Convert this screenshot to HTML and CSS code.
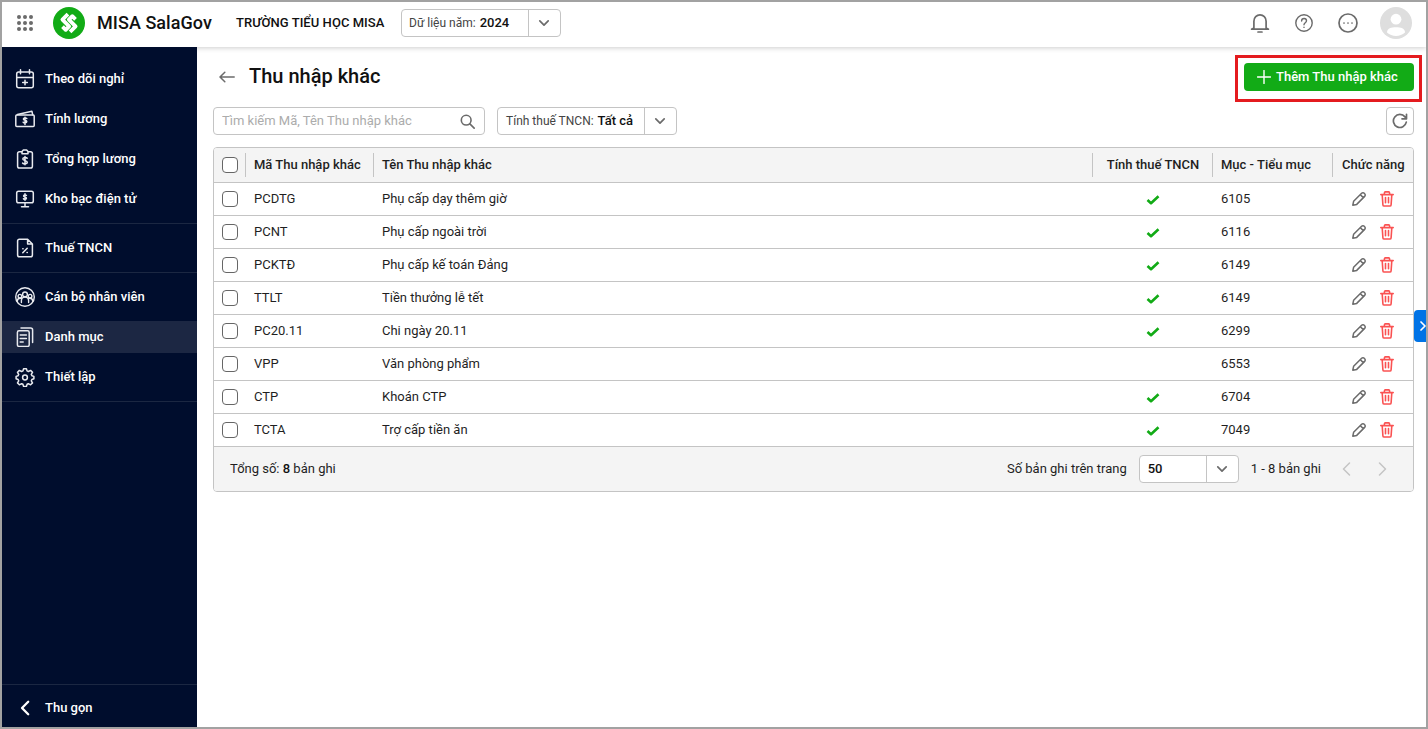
FILE: index.html
```
<!DOCTYPE html>
<html lang="vi">
<head>
  <meta charset="UTF-8">
  <meta name="viewport" content="width=device-width, initial-scale=1.0">
  <title>MISA SalaGov - Thu nhập khác</title>
  <link rel="stylesheet" href="styles.css">
</head>
<body>

<!-- Shared icons -->
<svg class="sprite">
  <symbol id="chevron" viewBox="0 0 12 12"><path d="M1.8 3.9 6 8.1l4.2-4.2"/></symbol>
  <symbol id="check" viewBox="0 0 14 12"><path d="M1.500 6 5 9.200l7.500-7"/></symbol>
  <symbol id="pencil" viewBox="0 0 16 16"><path d="M1.800 14.200l.8-3.900 8-8c.8-.8 2-.8 2.700 0l.4.4c.7.7.7 1.900 0 2.700l-8 8zM9.400 3.700l2.900 2.900"/></symbol>
  <symbol id="trash" viewBox="0 0 14 16"><path d="M.8 3.6h12.4M2.2 3.8l.7 10c.1.8.5 1.2 1.2 1.2h5.8c.7 0 1.1-.4 1.2-1.2l.7-10M4.4 3.4V1.9c0-.6.4-1 1-1h3.200c.6 0 1 .4 1 1v1.5M5.500 6.600v5.200M8.500 6.600v5.200"/></symbol>
</svg>

<header>
  <svg class="apps" viewBox="0 0 16 16">
    <circle cx="2" cy="2" r="2"/><circle cx="8" cy="2" r="2"/><circle cx="14" cy="2" r="2"/>
    <circle cx="2" cy="8" r="2"/><circle cx="8" cy="8" r="2"/><circle cx="14" cy="8" r="2"/>
    <circle cx="2" cy="14" r="2"/><circle cx="8" cy="14" r="2"/><circle cx="14" cy="14" r="2"/>
  </svg>
  <svg class="logo" viewBox="0 0 32 32">
    <circle cx="16" cy="16" r="16" fill="#12ab16"/>
    <g fill="none" stroke="#fff" stroke-width="3.800" stroke-linecap="butt" transform="translate(16 16) rotate(45)">
      <path d="M-7-5.500V2.300H2.500V7.200H-2"/>
      <path d="M7 5.500V-2.300H-2.500V-7.200H2"/>
    </g>
  </svg>
  <span class="brand">MISA SalaGov</span>
  <span class="school">TRƯỜNG TIỂU HỌC MISA</span>
  <div class="select year">
    <span>Dữ liệu năm: <b>2024</b></span>
    <i><svg><use href="#chevron"/></svg></i>
  </div>
  <div class="header-icons">
    <svg class="bell" viewBox="0 0 20 20"><path d="M1.600 16.200h16.800M3.900 16V8.200a6.100 6.400 0 0 1 12.200 0V16M3.900 14.600l-1.900 1.500M16.100 14.600l1.900 1.500M8 19h4"/></svg>
    <svg class="help" viewBox="0 0 20 20"><circle cx="10" cy="10" r="8.200"/><path d="M7.600 8c0-1.500 1.100-2.500 2.500-2.500s2.400 1 2.400 2.300c0 1.900-2.500 2-2.500 4M10 14.200v.2"/></svg>
    <svg class="more" viewBox="0 0 20 20"><circle cx="10" cy="10" r="9"/><path class="dots" d="M6 10h.01M10 10h.01M14 10h.01"/></svg>
    <svg class="avatar" viewBox="0 0 32 32"><circle cx="16" cy="16" r="16" fill="#dedede"/><circle cx="16" cy="12.200" r="5.400" fill="#fff"/><path d="M7 25.500c0-4 4.200-5.200 9-5.200s9 1.200 9 5.200c-2.600 2.300-5.600 3.400-9 3.400s-6.400-1.100-9-3.400z" fill="#fff"/></svg>
  </div>
</header>

<div class="layout">
  <!-- Sidebar -->
  <nav>
    <div class="group first">
      <a><svg viewBox="0 0 20 20"><rect x="1.700" y="3" width="16.600" height="15.800" rx="2"/><path d="M1.700 8.500h16.600M5.500.8v4M14.500.8v4M10 11.200v4.600M7.700 13.500h4.600"/></svg><span>Theo dõi nghỉ</span></a>
      <a><svg viewBox="0 0 20 20"><rect x=".8" y="6" width="18.400" height="11.400" rx="1"/><path d="M2.400 5.600 16.900 2.200l.8 3.600M11.800 9.500c-.5-.6-3.400-1-3.400.6 0 1.500 3.400.9 3.400 2.500 0 1.700-3 1.400-3.600.6M10 8.200v7.200"/></svg><span>Tính lương</span></a>
      <a><svg viewBox="0 0 20 20"><path d="M6.500 2.700H4.400c-1.100 0-1.800.7-1.800 1.800v12.700c0 1.100.7 1.800 1.800 1.800h11.200c1.100 0 1.800-.7 1.800-1.800V4.500c0-1.100-.7-1.800-1.800-1.800h-2.100"/><path d="M7 4.800h6V2.600L11.600 1H8.400L7 2.600zM12.200 9.200c-.7-1-4.400-1.200-4.400.8s4.500 1.300 4.500 3.300-3.900 1.900-4.700.7M10 7.600v8.200"/></svg><span>Tổng hợp lương</span></a>
      <a><svg viewBox="0 0 20 20"><rect x="1.700" y="2.200" width="16.600" height="11.600" rx="1.800"/><path d="M10 13.800v4M6.500 17.800h7M11.400 6.400c-.5-.7-2.800-.8-2.800.5s2.800.9 2.800 2.300-2.300 1.300-2.900.5M10 4.800v6.400"/></svg><span>Kho bạc điện tử</span></a>
    </div>
    <div class="group">
      <a><svg viewBox="0 0 20 20"><path d="M12.600 1.200H4.400c-1.100 0-1.800.7-1.800 1.800v14c0 1.100.7 1.800 1.800 1.800h11.200c1.100 0 1.800-.7 1.800-1.800V6zv4.800h4.800M7.800 14.800l4.400-4.600M7.800 10.800h.3M12 14.400h.3"/></svg><span>Thuế TNCN</span></a>
    </div>
    <div class="group">
      <a><svg class="people" viewBox="0 0 20 20"><circle cx="10" cy="10" r="9.300"/><circle cx="10" cy="7.400" r="2.400"/><circle cx="4.900" cy="9.200" r="1.800"/><circle cx="15.100" cy="9.200" r="1.800"/><path d="M6.400 15.600v-2c0-2 1.600-3.600 3.600-3.600s3.600 1.600 3.600 3.600v2M2.200 14.400c0-2 1-3.200 2.800-3.200l1.600.6M17.800 14.400c0-2-1-3.200-2.800-3.200l-1.600.6"/></svg><span>Cán bộ nhân viên</span></a>
      <a class="active"><svg viewBox="0 0 20 20"><rect x="2.400" y="3.800" width="11.800" height="15.600" rx="1.600"/><path d="M6 1h9.600c1.200 0 2 .8 2 2v12.500M5.200 8h6.200M5.200 11.500h6.200M5.200 15h3"/></svg><span>Danh mục</span></a>
      <a><svg viewBox="0 0 20 20"><path d="M8.600 1.700h2.800l.7 2.200 1.300.6 2.200-1.100 1.900 1.900-1.200 2.100.6 1.300 2 .7v2.300l-2 .8-.6 1.300 1.200 2.100-1.900 1.900-2.200-1.100-1.300.6-.7 2.100H8.600l-.7-2.100-1.300-.6-2.200 1.100-1.900-1.900 1.200-2.100-.6-1.300-2-.8V9.400l2-.7.6-1.300-1.200-2.100 1.900-1.900 2.200 1.100 1.300-.6z"/><circle cx="10" cy="10.500" r="2.400"/></svg><span>Thiết lập</span></a>
    </div>
    <div class="collapse">
      <a><svg class="back" viewBox="0 0 20 20"><path d="M13.200 3.800 7 10l6.200 6.200"/></svg><span>Thu gọn</span></a>
    </div>
  </nav>

  <main>
    <div class="title-row">
      <svg class="arrow" viewBox="0 0 16 12"><path d="M15.200 6H1.200M5.800 1.200 1 6l4.800 4.800"/></svg>
      <h1>Thu nhập khác</h1>
      <button class="add"><svg viewBox="0 0 14 14"><path d="M7 .5v13M.5 7h13"/></svg><span>Thêm Thu nhập khác</span></button>
    </div>

    <div class="toolbar">
      <div class="search">
        <input type="text" placeholder="Tìm kiếm Mã, Tên Thu nhập khác">
        <svg viewBox="0 0 16 16"><circle cx="6.600" cy="6.600" r="5.200"/><path d="M10.500 10.500l4.600 4.600"/></svg>
      </div>
      <div class="select tax">
        <span>Tính thuế TNCN: <b>Tất cả</b></span>
        <i><svg><use href="#chevron"/></svg></i>
      </div>
      <button class="reload"><svg viewBox="0 0 16 16"><path d="M14.300 9.200A6.500 6.500 0 1 1 13 3.900l1.300 1.500M14.500 1.300v4.500H10"/></svg></button>
    </div>

    <div class="grid">
      <table>
        <thead>
          <tr>
            <th class="c-check"><input type="checkbox"></th>
            <th class="c-code">Mã Thu nhập khác</th>
            <th>Tên Thu nhập khác</th>
            <th class="c-tax">Tính thuế TNCN</th>
            <th class="c-item">Mục - Tiểu mục</th>
            <th class="c-act">Chức năng</th>
          </tr>
        </thead>
        <tbody id="rows"></tbody>
      </table>
      <div class="pager">
        <span class="total">Tổng số: <b>8</b> bản ghi</span>
        <span class="per-page">Số bản ghi trên trang</span>
        <div class="select size">
          <span><b>50</b></span>
          <i><svg><use href="#chevron"/></svg></i>
        </div>
        <span class="range">1 - 8 bản ghi</span>
        <svg class="page prev" viewBox="0 0 9 14"><path d="M7.500 1 1.500 7l6 6"/></svg>
        <svg class="page next" viewBox="0 0 9 14"><path d="M1.500 1l6 6-6 6"/></svg>
      </div>
    </div>
  </main>
</div>

<div class="highlight"></div>
<div class="drawer"><svg viewBox="0 0 7 10"><path d="M2 1l4 4-4 4"/></svg></div>

<script>
  const items = [
    ['PCDTG', 'Phụ cấp dạy thêm giờ', true, '6105'],
    ['PCNT', 'Phụ cấp ngoài trời', true, '6116'],
    ['PCKTĐ', 'Phụ cấp kế toán Đảng', true, '6149'],
    ['TTLT', 'Tiền thưởng lễ tết', true, '6149'],
    ['PC20.11', 'Chi ngày 20.11', true, '6299'],
    ['VPP', 'Văn phòng phẩm', false, '6553'],
    ['CTP', 'Khoán CTP', true, '6704'],
    ['TCTA', 'Trợ cấp tiền ăn', true, '7049']
  ];

  document.getElementById('rows').innerHTML = items.map(([code, name, taxed, item]) => `
    <tr>
      <td class="c-check"><input type="checkbox"></td>
      <td>${code}</td>
      <td>${name}</td>
      <td class="c-tax">${taxed ? '<svg class="check"><use href="#check"/></svg>' : ''}</td>
      <td>${item}</td>
      <td class="c-act"><svg class="pencil"><use href="#pencil"/></svg><svg class="trash"><use href="#trash"/></svg></td>
    </tr>`).join('');
</script>

</body>
</html>
```
FILE: styles.css
```
* {
  box-sizing: border-box;
}
body {
  margin: 0;
  height: 729px;
  border: 2px solid #a2a2a2;
  font-family: Roboto, sans-serif;
  font-size: 13px;
  color: #1f1f1f;
  background: #fff;
  overflow: hidden;
  display: flex;
  flex-direction: column;
}
svg {
  display: block;
  flex: none;
  fill: none;
  stroke: #6b6b6b;
  stroke-width: 1.7;
  stroke-linecap: round;
  stroke-linejoin: round;
}
b {
  font-weight: 500;
  color: #111;
}
.sprite {
  position: absolute;
  width: 0;
  height: 0;
}

/* Header */
header {
  height: 45px;
  flex: none;
  display: flex;
  align-items: center;
  padding: 0 14px 3px 15px;
  position: relative;
  box-shadow: 0 1px 5px rgba(0, 0, 0, 0.2);
}
.apps {
  width: 16px;
  height: 16px;
  fill: #6b6b6b;
  stroke: none;
}
.logo {
  width: 32px;
  height: 32px;
  margin-left: 20px;
  stroke: none;
}
.brand {
  margin-left: 12px;
  width: 139px;
  padding-bottom: 2px;
  font-size: 18px;
  font-weight: 500;
  letter-spacing: 0.05px;
  color: #111;
  white-space: nowrap;
}
.school {
  width: 165px;
  padding-bottom: 1px;
  font-weight: 500;
  letter-spacing: 0.05px;
  color: #111;
  white-space: nowrap;
}
.select {
  height: 28px;
  display: flex;
  border: 1px solid #c4c4c4;
  border-radius: 4px;
  background: #fff;
  color: #444;
}
.select span {
  flex: 1;
  padding-left: 8px;
  font-size: 12px;
  line-height: 26px;
  white-space: nowrap;
}
.select b {
  font-size: 13px;
}
.year b, .tax b {
  margin-left: 1px;
}
.select i {
  width: 32px;
  display: flex;
  align-items: center;
  padding-left: 9px;
  border-left: 1px solid #c4c4c4;
}
.select svg {
  width: 12px;
  height: 12px;
}
.year {
  width: 160px;
}
.year span {
  padding-left: 7px;
}
.header-icons {
  margin-left: auto;
  display: flex;
  align-items: center;
}
.bell, .help, .more {
  width: 20px;
  height: 20px;
  margin-right: 24px;
}
.more {
  margin-right: 22px;
}
.help {
  stroke-width: 1.4;
}
.avatar {
  width: 32px;
  height: 32px;
  stroke: none;
}

/* Sidebar */
.layout {
  flex: 1;
  display: flex;
}
nav {
  position: relative;
  width: 195px;
  flex: none;
  display: flex;
  flex-direction: column;
  background: #000d2d;
}
.group {
  display: flex;
  flex-direction: column;
  gap: 8px;
  padding: 8px 0;
  border-bottom: 1px solid #1b2742;
}
.group.first {
  padding-top: 16px;
}
nav a {
  height: 32px;
  display: flex;
  align-items: center;
  gap: 10px;
  padding-left: 13px;
  color: #fff;
  font-weight: 500;
}
nav a span {
  padding-bottom: 2px;
}
nav a.active {
  background: #1c2743;
}
nav svg {
  width: 20px;
  height: 20px;
  stroke: #e8eaef;
  stroke-width: 1.5;
}
nav .people {
  stroke-width: 1.4;
}
nav .back {
  stroke: #fff;
  stroke-width: 2.3;
}
.collapse {
  margin-top: auto;
  height: 43px;
  padding-top: 7px;
  border-top: 1px solid #1b2742;
}

/* Content */
main {
  flex: 1;
  padding: 16px 12px 0 16px;
}
.title-row {
  display: flex;
  align-items: center;
  height: 28px;
}
.arrow {
  width: 16px;
  height: 12px;
  margin-left: 6px;
  stroke-width: 1.5;
}
h1 {
  margin: 0 0 2px 14px;
  font-size: 20px;
  font-weight: 500;
  color: #111;
}
.add {
  width: 170px;
  height: 28px;
  margin-left: auto;
  display: flex;
  align-items: center;
  gap: 5px;
  padding: 0 0 0 13px;
  border: none;
  border-radius: 4px;
  background: #12ab16;
  color: #fff;
  font: 500 13px Roboto, sans-serif;
  white-space: nowrap;
}
.add span {
  padding-bottom: 2px;
}
.add svg {
  width: 14px;
  height: 14px;
  stroke: #fff;
  stroke-width: 1.4;
}
.toolbar {
  display: flex;
  gap: 12px;
  margin: 16px 0 12px;
}
.search {
  width: 272px;
  height: 28px;
  display: flex;
  align-items: center;
  padding: 0 9px 0 8px;
  border: 1px solid #c4c4c4;
  border-radius: 4px;
}
.search input {
  flex: 1;
  min-width: 0;
  padding: 0 0 2px;
  border: none;
  outline: none;
  font: 13px Roboto, sans-serif;
}
.search input::placeholder {
  color: #acacac;
}
.search svg {
  width: 15px;
  height: 15px;
}
.tax {
  width: 180px;
}
.reload {
  width: 28px;
  height: 28px;
  margin-left: auto;
  padding: 5px;
  border: 1px solid #c4c4c4;
  border-radius: 4px;
  background: #fff;
}
.reload svg {
  width: 16px;
  height: 16px;
}

/* Table */
.grid {
  border: 1px solid #c4c4c4;
  border-radius: 4px;
  overflow: hidden;
}
table {
  width: 100%;
  table-layout: fixed;
  border-collapse: separate;
  border-spacing: 0;
}
th, td {
  height: 33px;
  padding: 0 0 1px 8px;
  border-bottom: 1px solid #c4c4c4;
  text-align: left;
  white-space: nowrap;
}
th {
  height: 35px;
  font-weight: 500;
  background: linear-gradient(#c4c4c4, #c4c4c4) right 5px / 1px 24px no-repeat #f4f4f4;
}
th:last-child {
  padding-left: 9px;
  background: #f4f4f4;
}
.c-check {
  width: 32px;
  padding: 0 0 0 8px;
}
.c-code {
  width: 128px;
}
.c-tax {
  width: 120px;
  padding-left: 0;
  text-align: center;
}
.c-item {
  width: 120px;
}
.c-act {
  width: 80px;
}
input[type="checkbox"] {
  display: block;
  appearance: none;
  width: 16px;
  height: 16px;
  margin: 0;
  border: 1px solid #666;
  border-radius: 4px;
  background: #fff;
}
.check {
  width: 14px;
  height: 12px;
  margin: 2px auto 0;
  stroke: #12ab16;
  stroke-width: 2.6;
  stroke-linecap: butt;
}
.pencil, .trash {
  display: inline-block;
  vertical-align: middle;
  height: 16px;
}
.pencil {
  width: 16px;
  margin-left: 10px;
  stroke-width: 1.5;
}
.trash {
  width: 14px;
  margin-left: 13px;
  stroke: #fa5252;
  stroke-width: 1.6;
}
td.c-act {
  padding-bottom: 0;
}

/* Pager */
.pager {
  height: 44px;
  display: flex;
  align-items: center;
  padding: 0 26px 0 16px;
  background: #f4f4f4;
}
.total, .per-page, .range {
  padding-bottom: 2px;
}
.per-page {
  margin-left: auto;
}
.size {
  width: 100px;
  margin: 0 12px;
}
.page {
  width: 9px;
  height: 14px;
  stroke: #c4c4c4;
  stroke-width: 1.5;
}
.prev {
  margin-left: 21px;
}
.next {
  margin-left: 27px;
}

/* Overlays */
.highlight {
  position: absolute;
  left: 1235px;
  top: 55px;
  width: 187px;
  height: 47px;
  border: 3px solid #e41b1f;
}
.drawer {
  position: absolute;
  right: 2px;
  top: 310px;
  width: 12px;
  height: 32px;
  display: flex;
  align-items: center;
  justify-content: flex-end;
  border-radius: 4px 0 0 4px;
  background: #0073e6;
}
.drawer svg {
  width: 7px;
  height: 10px;
  stroke: #fff;
}
```
